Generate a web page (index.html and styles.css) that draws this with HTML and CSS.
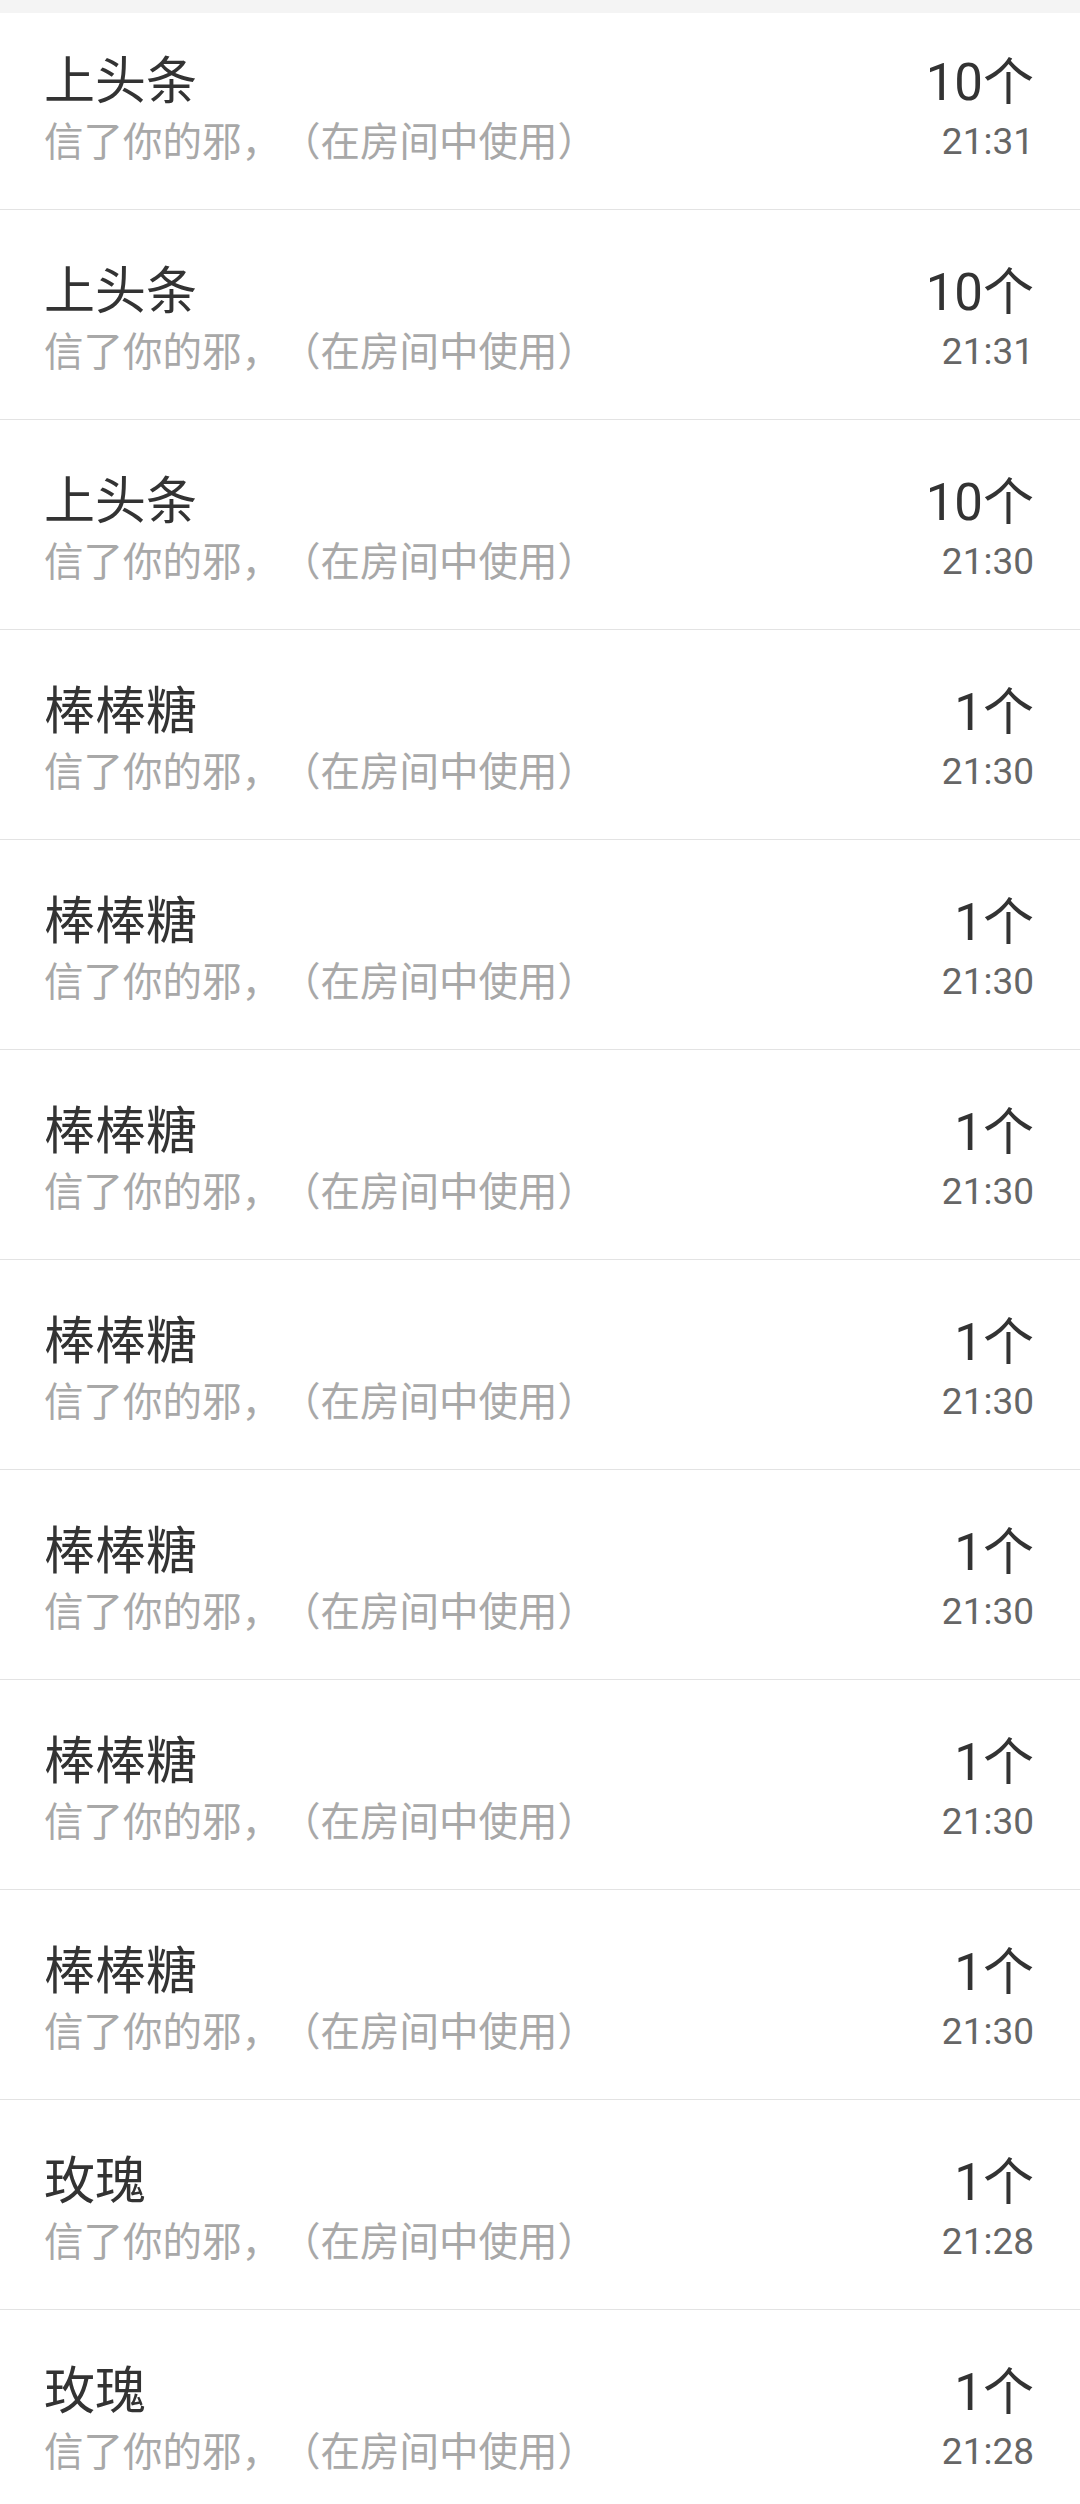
FILE: index.html
```html
<!DOCTYPE html>
<html lang="zh">
<head>
<meta charset="utf-8">
<link rel="stylesheet" href="styles.css">
</head>
<body>
<div class="topbar"></div>
<ul class="list">
  <li class="row"><div class="left"><div class="title">上头条</div><div class="sub">信了你的邪，（在房间中使用）</div></div><div class="right"><div class="count">10个</div><div class="time">21:31</div></div></li>
  <li class="row"><div class="left"><div class="title">上头条</div><div class="sub">信了你的邪，（在房间中使用）</div></div><div class="right"><div class="count">10个</div><div class="time">21:31</div></div></li>
  <li class="row"><div class="left"><div class="title">上头条</div><div class="sub">信了你的邪，（在房间中使用）</div></div><div class="right"><div class="count">10个</div><div class="time">21:30</div></div></li>
  <li class="row"><div class="left"><div class="title">棒棒糖</div><div class="sub">信了你的邪，（在房间中使用）</div></div><div class="right"><div class="count">1个</div><div class="time">21:30</div></div></li>
  <li class="row"><div class="left"><div class="title">棒棒糖</div><div class="sub">信了你的邪，（在房间中使用）</div></div><div class="right"><div class="count">1个</div><div class="time">21:30</div></div></li>
  <li class="row"><div class="left"><div class="title">棒棒糖</div><div class="sub">信了你的邪，（在房间中使用）</div></div><div class="right"><div class="count">1个</div><div class="time">21:30</div></div></li>
  <li class="row"><div class="left"><div class="title">棒棒糖</div><div class="sub">信了你的邪，（在房间中使用）</div></div><div class="right"><div class="count">1个</div><div class="time">21:30</div></div></li>
  <li class="row"><div class="left"><div class="title">棒棒糖</div><div class="sub">信了你的邪，（在房间中使用）</div></div><div class="right"><div class="count">1个</div><div class="time">21:30</div></div></li>
  <li class="row"><div class="left"><div class="title">棒棒糖</div><div class="sub">信了你的邪，（在房间中使用）</div></div><div class="right"><div class="count">1个</div><div class="time">21:30</div></div></li>
  <li class="row"><div class="left"><div class="title">棒棒糖</div><div class="sub">信了你的邪，（在房间中使用）</div></div><div class="right"><div class="count">1个</div><div class="time">21:30</div></div></li>
  <li class="row"><div class="left"><div class="title">玫瑰</div><div class="sub">信了你的邪，（在房间中使用）</div></div><div class="right"><div class="count">1个</div><div class="time">21:28</div></div></li>
  <li class="row"><div class="left"><div class="title">玫瑰</div><div class="sub">信了你的邪，（在房间中使用）</div></div><div class="right"><div class="count">1个</div><div class="time">21:28</div></div></li>
</ul>
</body>
</html>
```

FILE: styles.css
```css
html, body {
  margin: 0;
  padding: 0;
  background: #ffffff;
  font-family: Roboto, "Noto Sans CJK SC", sans-serif;
  overflow: hidden;
}
.topbar {
  position: absolute;
  top: 0;
  left: 0;
  right: 0;
  height: 13px;
  background: #f4f4f4;
  z-index: 2;
}
.list {
  list-style: none;
  margin: 0;
  padding: 0;
}
.row {
  height: 209px;
  box-sizing: content-box;
  border-bottom: 1px solid #e3e3e3;
  display: flex;
  justify-content: space-between;
  align-items: center;
  padding: 0 46px 0 44px;
}
.left, .right {
  display: flex;
  flex-direction: column;
}
.right {
  align-items: flex-end;
}
.title {
  font-size: 51px;
  line-height: 76px;
  color: #333333;
}
.sub {
  font-size: 39.5px;
  line-height: 46px;
  color: #a8a8a8;
  white-space: nowrap;
  text-spacing-trim: space-all;
}
.count {
  font-size: 51px;
  line-height: 75px;
  color: #333333;
}
.time {
  font-size: 37px;
  line-height: 44px;
  color: #666666;
}
```
